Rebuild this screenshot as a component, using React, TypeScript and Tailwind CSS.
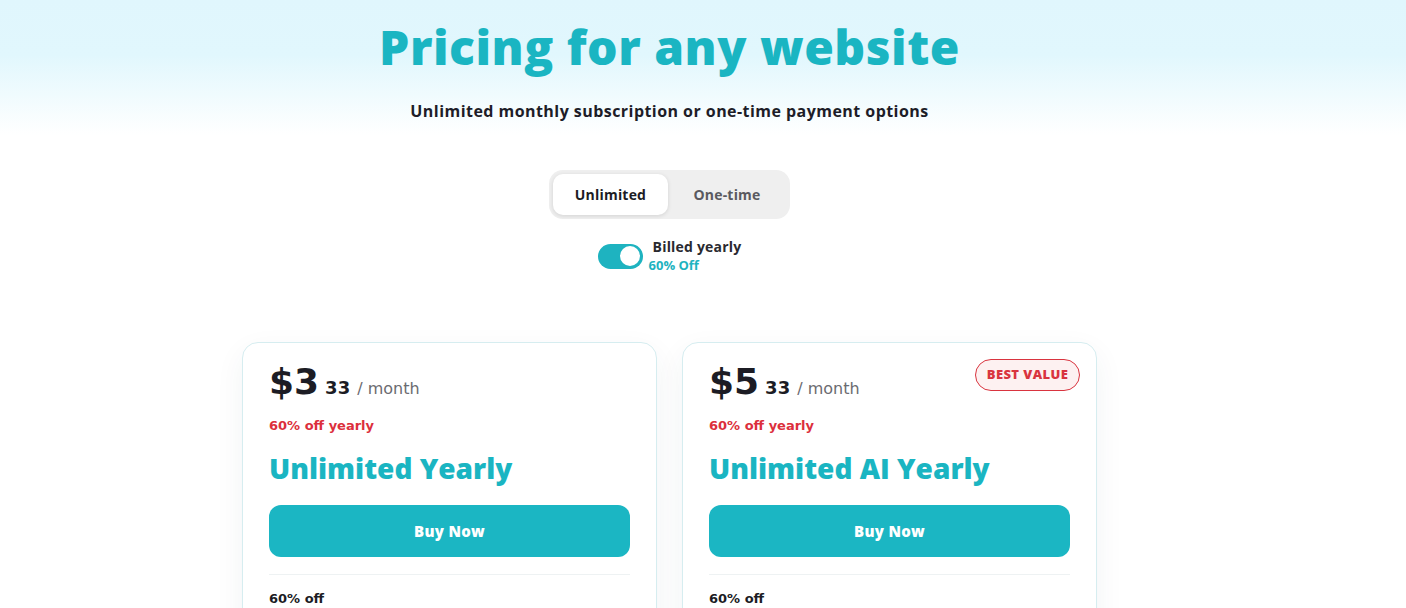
import React from "react";

const display = "font-['Open_Sans','Noto_Sans',sans-serif]";
const body = "font-['DejaVu_Sans','Noto_Sans',sans-serif]";

interface Plan {
    price: string;
    cents: string;
    title: string;
    badge?: string;
}

const plans: Plan[] = [
    { price: "$3", cents: "33", title: "Unlimited Yearly" },
    { price: "$5", cents: "33", title: "Unlimited AI Yearly", badge: "BEST VALUE" },
];

function PlanCard({ plan }: { plan: Plan }) {
    return (
        <div className="relative w-[415px] min-h-[420px] rounded-[16px] border border-[#d6edf0] bg-white px-[26px] pt-[17px] shadow-[0_10px_30px_rgba(20,60,80,0.06)]">
            {plan.badge && (
                <span
                    className={`absolute right-[16px] top-[16px] flex h-[32px] w-[105px] items-center justify-center rounded-full border border-[#d9343f] bg-[#fdf1f1] text-[13px] font-extrabold tracking-[0.4px] text-[#d9343f] ${display}`}
                >
                    {plan.badge}
                </span>
            )}
            <div className={`flex items-baseline leading-[44px] ${body}`}>
                <span className="text-[36px] font-bold text-[#1c1c24]">{plan.price}</span>
                <span className="ml-[6px] text-[18px] font-bold text-[#1c1c24]">{plan.cents}</span>
                <span className="ml-[7px] text-[16px] text-[#6b6b70]">/ month</span>
            </div>
            <p className={`mt-[5px] text-[13px] font-bold leading-[20px] text-[#dc2f3c] ${body}`}>
                60% off yearly
            </p>
            <h2 className={`mt-[14px] text-[28px] font-extrabold leading-[36px] text-[#1ab5c2] ${display}`}>
                {plan.title}
            </h2>
            <button
                className={`mt-[19px] flex h-[52px] w-full items-center justify-center rounded-[12px] bg-[#1bb6c3] text-[15px] font-extrabold tracking-[0.3px] text-white ${display}`}
            >
                Buy Now
            </button>
            <div className="mt-[17px] h-px w-full bg-[#eef2f3]" />
            <p className={`mt-[14px] text-[13px] font-bold leading-[20px] text-[#1c1c24] ${body}`}>
                60% off
            </p>
        </div>
    );
}

export default function App() {
    return (
        <div className="min-h-screen bg-[linear-gradient(180deg,#e0f6fd_0px,#e1f7fd_55px,#ffffff_135px)]">
            <div className="flex flex-col items-center pr-[67px] pt-[17px]">
                <h1 className={`text-[48px] font-extrabold leading-[60px] tracking-[0.5px] text-[#1ab5c2] ${display}`}>
                    Pricing for any website
                </h1>
                <p className={`mt-[22px] text-[16px] font-bold leading-[24px] tracking-[0.45px] text-[#1d1d28] ${display}`}>
                    Unlimited monthly subscription or one-time payment options
                </p>

                <div className={`mt-[47px] flex h-[49px] w-[241px] rounded-[14px] bg-[#efefef] p-[4px] ${display}`}>
                    <button className="h-[41px] w-[115px] rounded-[10px] bg-white text-[14px] font-bold tracking-[0.2px] text-[#1c1c24] shadow-[0_1px_4px_rgba(0,0,0,0.12)]">
                        Unlimited
                    </button>
                    <button className="h-[41px] flex-1 text-[14px] font-bold tracking-[0.2px] text-[#5a5a60]">
                        One-time
                    </button>
                </div>

                <div className="mt-[19px] flex items-center">
                    <div className="flex h-[25px] w-[45px] items-center justify-end rounded-full bg-[#1eb3c0] pr-[3px]">
                        <span className="h-[20px] w-[20px] rounded-full bg-white" />
                    </div>
                    <div className={`ml-[10px] flex flex-col leading-[18px] ${display}`}>
                        <span className="text-[14px] font-bold tracking-[0.2px] text-[#2a2a30]">Billed yearly</span>
                        <span className="-ml-[4px] text-[13px] font-bold text-[#1eb3c0]">60% Off</span>
                    </div>
                </div>

                <div className="mt-[68px] flex gap-[25px]">
                    {plans.map((plan) => (
                        <PlanCard key={plan.title} plan={plan} />
                    ))}
                </div>
            </div>
        </div>
    );
}
